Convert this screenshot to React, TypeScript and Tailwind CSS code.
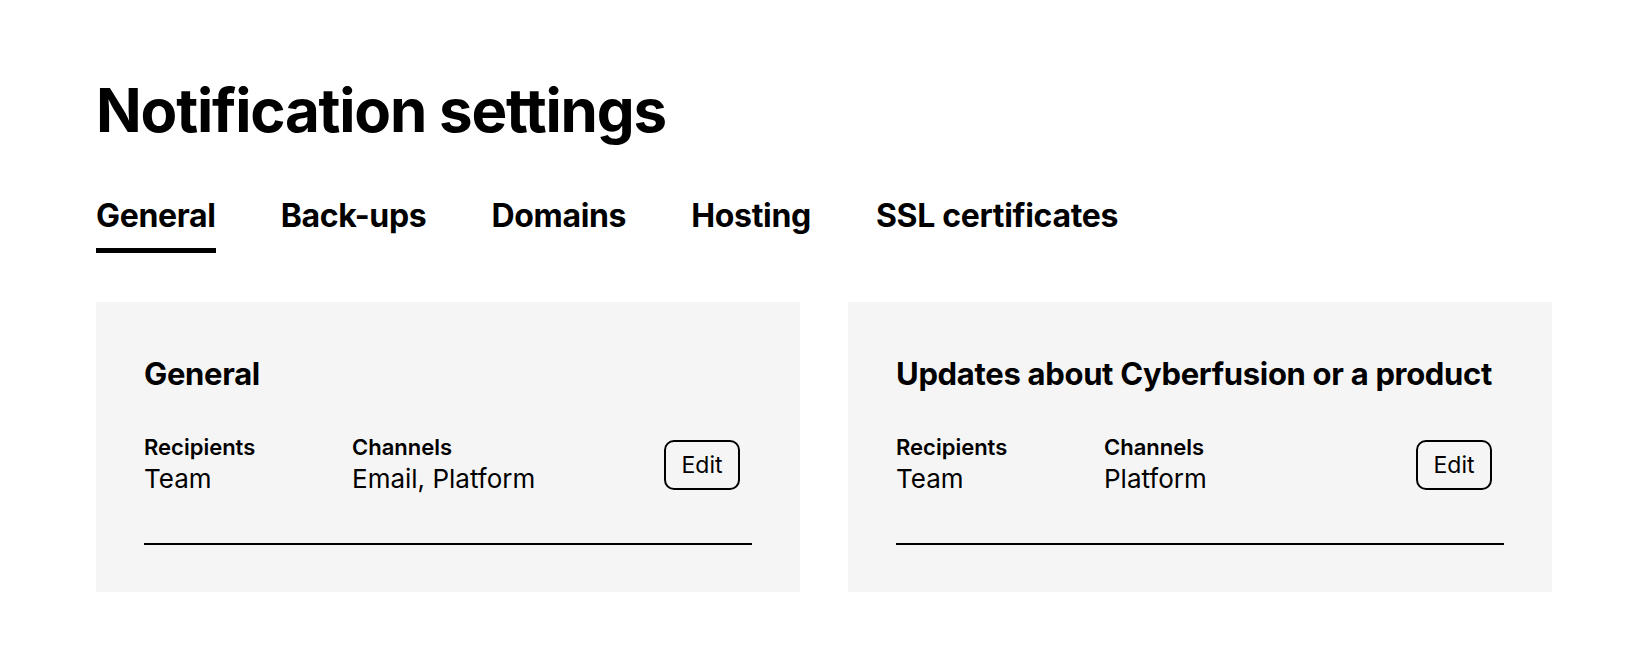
const tabs = ['General', 'Back-ups', 'Domains', 'Hosting', 'SSL certificates'];

const cards = [
  { title: 'General', recipients: 'Team', channels: 'Email, Platform' },
  { title: 'Updates about Cyberfusion or a product', recipients: 'Team', channels: 'Platform' },
];

export default function App() {
  return (
    <div className="min-h-[672px] bg-white text-black px-[96px] pt-[76px]" style={{ fontFamily: 'Inter, "Liberation Sans", sans-serif' }}>
      <h1 className="text-[60px] leading-[68px] font-bold tracking-[-0.02em]">Notification settings</h1>

      <div className="mt-[52px] flex gap-[65px]">
        {tabs.map((t, i) => (
          <div key={t} className="flex flex-col">
            <span className="text-[32px] leading-[40px] font-bold tracking-[-0.01em]">{t}</span>
            <div className={i === 0 ? 'mt-[12px] h-[5px] bg-black' : 'mt-[12px] h-[5px]'} />
          </div>
        ))}
      </div>

      <div className="mt-[49px] flex gap-[48px]">
        {cards.map((c) => (
          <div key={c.title} className="w-[704px] h-[290px] bg-[#f5f5f5] px-[48px] pt-[52px]">
            <h2 className="text-[31px] leading-[40px] font-bold tracking-[-0.01em]">{c.title}</h2>
            <div className="mt-[39px] flex items-center pr-[12px]">
              <div className="w-[208px]">
                <div className="text-[22px] leading-[28px] font-semibold">Recipients</div>
                <div className="text-[26px] leading-[36px]">{c.recipients}</div>
              </div>
              <div className="flex-1">
                <div className="text-[22px] leading-[28px] font-semibold">Channels</div>
                <div className="text-[26px] leading-[36px]">{c.channels}</div>
              </div>
              <button className="w-[76px] h-[50px] border-2 border-black rounded-[10px] text-[23px]">Edit</button>
            </div>
            <div className="mt-[46px] h-[2px] bg-black" />
          </div>
        ))}
      </div>
    </div>
  );
}
